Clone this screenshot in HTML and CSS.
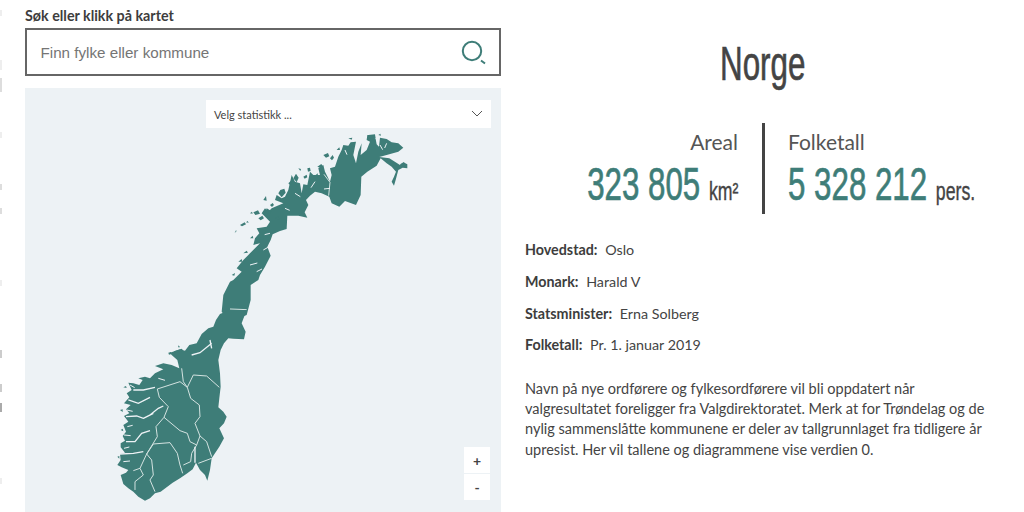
FILE: index.html
```html
<!DOCTYPE html>
<html lang="no">
<head>
<meta charset="utf-8">
<title>Norge</title>
<link rel="stylesheet" href="styles.css">
</head>
<body>
<div class="edge"></div>
<main class="page">
  <section class="left">
    <label class="search-label">Søk eller klikk på kartet</label>
    <div class="search">
      <span class="placeholder">Finn fylke eller kommune</span>
      <svg class="search-icon" width="26" height="26" viewBox="0 0 26 26" fill="none" stroke="#3e7d78"><circle cx="11" cy="11" r="9.2" stroke-width="2"/><path d="M20 20.5l4 3" stroke-width="2"/></svg>
    </div>
    <div class="map">
      <div class="select"><span>Velg statistikk ...</span>
        <svg width="12" height="8" viewBox="0 0 12 8" fill="none" stroke="#555" stroke-width="1"><path d="M1 1l5 5 5-5"/></svg>
      </div>
      <svg class="norway" width="476" height="424" viewBox="25 88 476 424">
        <g transform="translate(230 125) scale(.3333)">
          <path class="land" d="M50 570L62 525 62 480 85 465 90 450 105 425 122 392 112 365 122 345 128 328 150 318 170 312 172 272 205 272 232 278 224 262 235 240 228 225 240 212 255 200 275 205 298 215 305 235 328 245 345 228 378 240 392 210 394 155 412 140 440 122 452 100 470 115 485 125 498 140 492 155 485 170 492 182 497 165 505 135 518 128 532 130 532 118 520 112 510 120 497 112 478 100 448 96 470 90 505 80 520 68 505 55 485 52 470 42 450 38 447 65 440 58 437 42 425 30 412 30 410 45 420 50 410 75 392 90 395 55 385 80 378 115 370 90 378 50 362 52 355 62 340 60 335 75 325 95 315 125 300 130 305 150 300 170 285 140 280 120 265 130 270 150 250 150 240 140 232 180 220 178 215 205 210 175 195 170 185 150 175 195 165 215 155 220 140 210 135 225 160 235 125 250 115 260 105 250 95 265 120 290 110 305 80 310 88 325 75 340 70 360 90 355 60 385 40 405 20 430 35 440 10 465 0 470 -20 510 -25 560 0 590Z"/>
          <path class="land" d="M190 160l8-14 8 12-6 14zM145 205l6-10 12-4 4 12-12 14zM100 225l8-12 2 14zM70 262l14-6 6 10-14 4zM110 250l14 8-4 10-14-6zM30 300l14-8 4 6-12 6zM14 324l4-8 2 2zM280 90l14-6 4 10-10 4zM355 40l12-2-2 6zM415 30l20-2 2 12-14 6zM205 130l8 2-2 6zM232 130l8-2 2 10-8 2zM262 125l12-8 6 8-8 4zM40 385l10-8 4 6zM85 345l12-10 4 8zM135 280l10-6 4 10zM250 155l14-10-2 12zM510 118l12-6 6 8-8 6zM60 265l6-5 2 6zM85 280l12-8 5 8-10 6zM48 292l5-4 3 5zM120 240l8-6 4 6-6 6zM175 175l8-8 4 8-6 6zM220 155l10-6 2 8-8 4zM300 100l8-10 4 8-6 8zM320 75l8-8 2 8zM5 450l10-6-2 8zM25 410l10-8 2 8zM60 340l8-8 2 8zM445 30l6-4 2 6z"/>
          <path class="line" d="M282 148l18 24-4 40M0 552l50 2"/>
          <path class="notch" d="M450 60l8 14M470 55l-6 14M345 75l6 14M300 190l-18 2M255 170l-12 18M195 205l16 10M165 250l14 6M120 325l-16 4M100 375l14-8M60 420l22-6M80 440l16-8"/>
        </g>
        <g transform="translate(100 310) scale(.3333)">
          <path class="land" d="M440 0L425 40 437 65 432 88 400 86 385 85 372 100 362 120 355 150 360 190 362 230 358 265 355 292 370 305 380 320 372 340 358 355 372 385 358 410 345 430 335 445 330 480 322 512 315 495 300 480 288 458 278 478 262 490 240 505 218 518 205 528 182 545 165 550 150 565 135 572 115 560 100 545 85 535 70 522 62 495 78 488 85 480 65 472 52 465 62 450 60 432 75 428 62 412 62 400 75 392 68 378 78 365 70 345 85 335 72 318 88 310 78 298 92 285 72 280 88 262 80 250 95 240 85 218 100 220 118 225 128 210 115 205 135 200 150 205 165 190 190 178 165 168 190 160 215 165 238 175 232 150 215 135 210 128 240 118 255 122 268 105 290 100 305 72 325 55 340 50 348 30 360 12 390 0Z"/>
          <path class="land" d="M222 124l24-8 3 6-24 6zM205 128l8-2 2 6-8 2zM236 106l4 6-6 0zM52 440l6-2 0 8zM62 360l6-4 2 8zM60 300l8-2 0 8zM70 232l8-4 2 6z"/>
          <path class="line" d="M245 175L250 215 262 232M172 237L240 215 262 232 280 195 320 198 358 232M262 232L272 265 298 285 300 320 285 340 300 378 320 395 335 440M172 237L178 262 205 290 192 322 240 362 262 370 270 395 290 405 300 378M192 322L168 350 172 380 140 432 160 402 210 398 232 430 240 465 248 490M140 432L155 450 160 495 150 510 165 545M140 432L120 475 100 482M120 475L130 495 105 515 105 540M290 405L275 430 272 455 250 465M295 460L335 445"/>
          <path class="gap" d="M78 320L110 318 130 325 150 315 175 295 190 288M130 325L160 310M85 270L115 280 150 262M100 240L130 240 165 232M78 395L105 395 125 370 150 362M60 432L100 430 130 425M275 135L300 128 335 100M330 90L335 115M285 410L285 458"/>
          <path class="notch" d="M80 300l18 4M82 350l16-4M72 375l20 2M72 415l16-4M70 455l20-2M90 225l14 8M175 205l20 6"/>
        </g>
      </svg>
      <div class="zoom-controls">
        <button class="zoom-btn">+</button>
        <button class="zoom-btn">-</button>
      </div>
    </div>
  </section>
  <section class="right">
    <h1 class="title"><span class="narrow">Norge</span></h1>
    <div class="stats">
      <div class="stat stat-a">
        <div class="stat-label">Areal</div>
        <div class="stat-value"><span class="narrow narrow-end">323 805 <small>km²</small></span></div>
      </div>
      <div class="stat stat-b">
        <div class="stat-label">Folketall</div>
        <div class="stat-value"><span class="narrow narrow-start">5 328 212 <small>pers.</small></span></div>
      </div>
    </div>
    <ul class="facts">
      <li><b>Hovedstad:</b> Oslo</li>
      <li><b>Monark:</b> Harald V</li>
      <li><b>Statsminister:</b> Erna Solberg</li>
      <li><b>Folketall:</b> Pr. 1. januar 2019</li>
    </ul>
    <p class="note">Navn på nye ordførere og fylkesordførere vil bli oppdatert når valgresultatet foreligger fra Valgdirektoratet. Merk at for Trøndelag og de nylig sammenslåtte kommunene er deler av tallgrunnlaget fra tidligere år upresist. Her vil tallene og diagrammene vise verdien 0.</p>
  </section>
</main>
</body>
</html>
```
FILE: styles.css
```css
* { box-sizing: border-box; }
html, body { margin: 0; height: 512px; overflow: hidden; background: #fff; }
body { font-family: "Lato", "Noto Sans", sans-serif; color: #444; }
.edge { position: absolute; left: 0; top: 0; width: 2px; height: 512px; background: linear-gradient(#fff 10px, #eee 10px, #eee 16px, #fff 16px, #fff 60px, #eee 60px, #eee 70px, #fff 70px, #fff 78px, #ddd 78px, #ddd 92px, #fff 92px, #fff 132px, #eee 132px, #eee 138px, #fff 138px, #fff 184px, #ddd 184px, #ddd 190px, #fff 190px, #fff 208px, #ddd 208px, #ddd 214px, #fff 214px, #fff 280px, #eee 280px, #eee 286px, #fff 286px, #fff 350px, #ccc 350px, #ccc 358px, #fff 358px, #fff 384px, #ccc 384px, #ccc 392px, #fff 392px, #fff 403px, #aaa 403px, #aaa 412px, #fff 412px, #fff 478px, #eee 478px, #eee 484px, #fff 484px); }
.page { display: flex; height: 512px; padding-left: 25px; gap: 24px; }
.left { width: 476px; flex: none; display: flex; flex-direction: column; }
.search-label { display: block; height: 28px; padding-top: 7px; font-size: 14.3px; line-height: 18px; font-weight: 700; color: #3d3d3d; }
.search { height: 48px; border: 2.5px solid #666; display: flex; align-items: center; justify-content: space-between; padding: 0 12px 0 13.5px; flex: none; }
.placeholder { font-family: "Liberation Sans", sans-serif; font-size: 15.2px; color: #757575; }
.search-icon { margin-top: 1px; }
.map { margin-top: 12px; flex: 1; background: #edf2f5; position: relative; overflow: hidden; }
.select { position: absolute; top: 12px; left: 181px; width: 285px; height: 28px; background: #fff; display: flex; align-items: center; justify-content: space-between; padding: 0 8px; font-size: 11px; color: #444; }
.norway { position: absolute; left: 0; top: 0; }
.land { fill: #3e7d78; }
.line { fill: none; stroke: #d4e3e1; stroke-width: 3; }
.gap { fill: none; stroke: #edf2f5; stroke-width: 4; }
.notch { fill: none; stroke: #edf2f5; stroke-width: 3; }
.zoom-controls { position: absolute; left: 439px; top: 359px; display: flex; flex-direction: column; gap: 1px; }
.zoom-btn { width: 26px; height: 26px; border: 0; padding: 0; background: #fff; font-family: "Lato", sans-serif; font-size: 14px; font-weight: 700; color: #444; }
.right { flex: 1; min-width: 0; }
.narrow { display: inline-block; white-space: nowrap; transform: scaleX(.68); font-family: "Liberation Sans", sans-serif; -webkit-text-stroke: .7px currentColor; }
.narrow-end { transform-origin: right center; flex: none; }
.narrow-start { transform-origin: left center; flex: none; }
.title { margin: 31px 0 0; height: 60px; width: 476px; text-align: center; font-size: 49px; line-height: 60px; font-weight: 400; color: #444; }
.title .narrow { transform: scaleX(.64); }
.stats { margin-top: 32px; width: 476px; display: flex; height: 91px; }
.stat-a { flex: 0 0 240px; min-width: 0; text-align: right; padding-right: 24px; border-right: 3px solid #444; }
.stat-b { flex: 0 0 236px; padding-left: 23px; min-width: 0; overflow: hidden; }
.stat-label { font-size: 21px; line-height: 26px; padding-top: 6px; margin-bottom: 4px; color: #555; }
.stat-value { display: flex; font-size: 46px; line-height: 50px; color: #3e7d78; white-space: nowrap; }
.stat-a .stat-value { justify-content: flex-end; }
.stat-value small { font-size: 26px; color: #444; -webkit-text-stroke: .4px currentColor; }
.facts { list-style: none; margin: 20px 0 0; padding: 0; font-size: 14.3px; }
.facts li { height: 31.8px; line-height: 32px; }
.facts b { color: #3d3d3d; margin-right: 4px; }
.note { margin: 17.5px 0 0; width: 476px; font-size: 14.5px; line-height: 20.3px; }
```
